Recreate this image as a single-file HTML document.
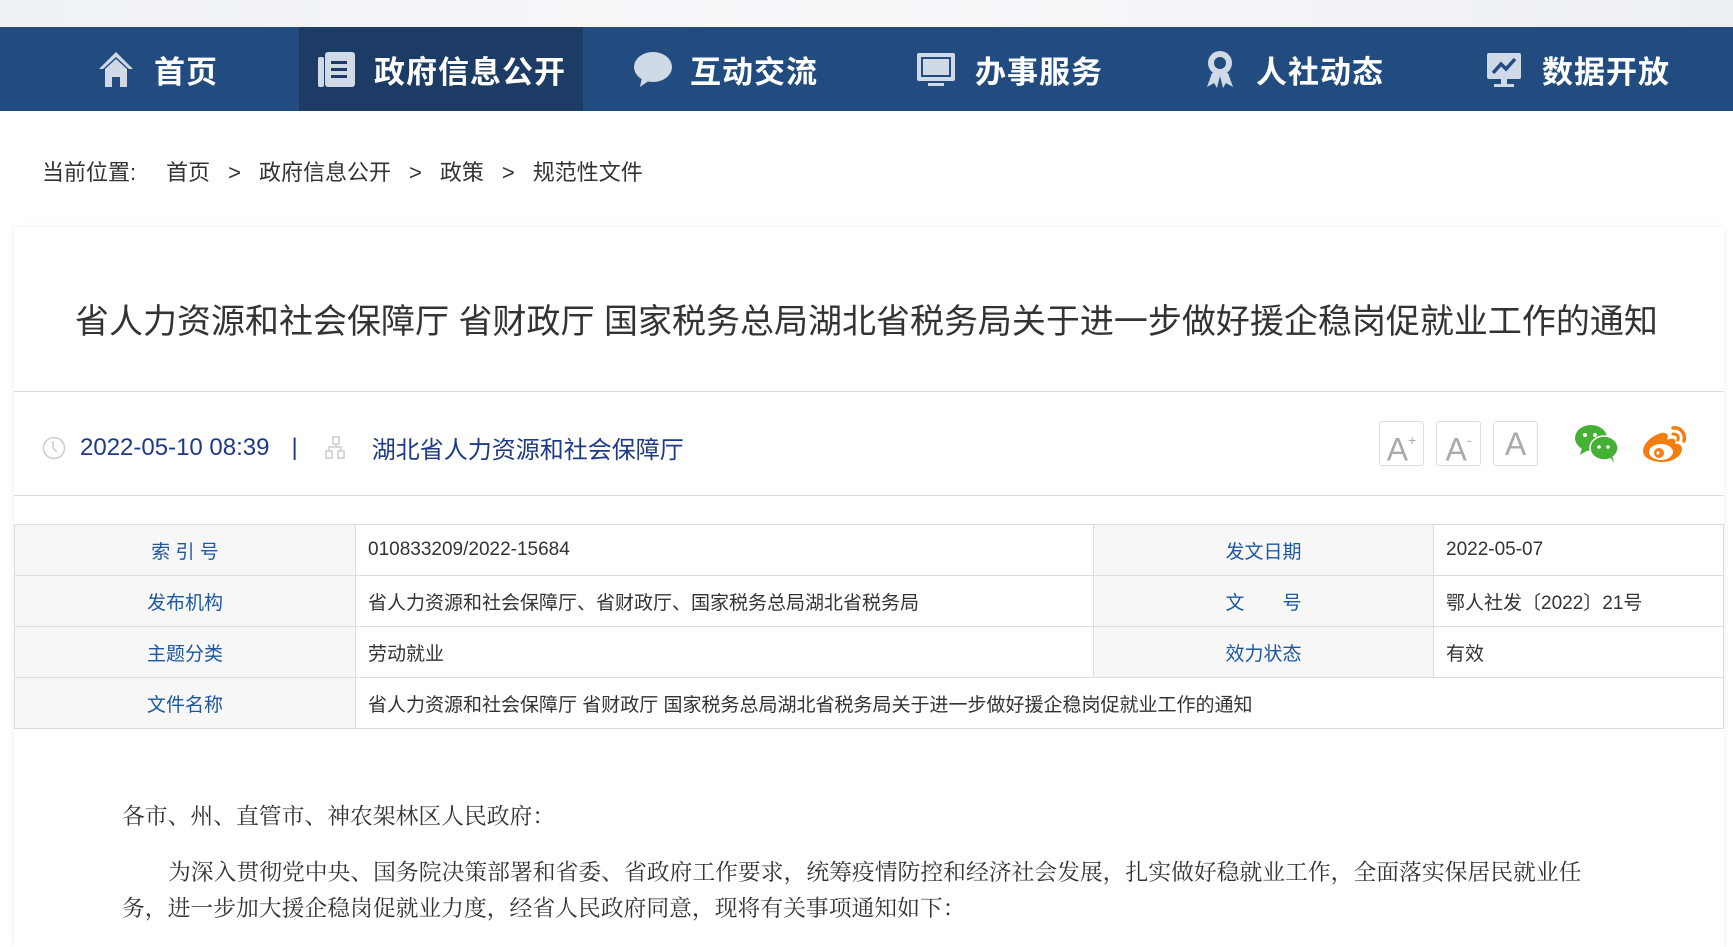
<!DOCTYPE html>
<html><head><meta charset="utf-8"><style>
*{margin:0;padding:0;box-sizing:border-box}
body{width:1733px;height:935px;overflow:hidden;background:#fff;font-family:"Liberation Sans","Noto Sans CJK SC",sans-serif;position:relative}
.top{position:absolute;left:0;top:0;width:1733px;height:27px;background:linear-gradient(90deg,#eef1f5,#f7f8fa,#eceff3)}
.nav{position:absolute;left:0;top:27px;width:1733px;height:84px;background:#224b80}
.tab{position:absolute;top:0;height:84px;width:284px;display:flex;align-items:center;justify-content:center;color:#fff;font-weight:bold;font-size:31px;letter-spacing:1px}
.tab svg{margin-right:18px}
.tab.act{background:#1c3c66}
.crumb{position:absolute;left:42px;top:155px;font-size:22px;color:#333}
.crumb span{margin:0 18px}
.card{position:absolute;left:14px;top:227px;width:1710px;height:720px;background:#fff;box-shadow:0 0 6px rgba(0,0,0,.08)}
.title{position:absolute;left:0;top:294px;width:1733px;text-align:center;font-size:34px;color:#333}
.hl{position:absolute;left:14px;width:1710px;height:1px;background:#ddd}
.meta{position:absolute;left:42px;top:430px;font-size:24px;color:#1e3a86;display:flex;align-items:center}
.fb{position:absolute;top:421px;width:45px;height:45px;border:1px solid #ddd;border-radius:3px;color:#aaa;font-size:32px;text-align:center;line-height:44px}
table{position:absolute;left:14px;top:524px;width:1710px;border-collapse:collapse;font-size:19px}
td{border:1px solid #ddd;height:51px;padding:0 12px;color:#333;vertical-align:middle}
td.k{background:#f7f7f7;color:#1e58a0;text-align:center}
.p{position:absolute;font-size:22.8px;color:#333;font-family:"Liberation Serif","Noto Serif CJK SC",serif}
</style></head><body>
<div class="top"></div>
<div class="nav">
 <div class="tab" style="left:15px"><svg width="40" height="40" viewBox="0 0 40 40"><path d="M20 3 L3 20 L7 20 L20 8 L33 20 L37 20Z" fill="#d0d9e6"/><path d="M9 20 L20 10 L31 20 L31 38 L24 38 L24 28 L16 28 L16 38 L9 38Z" fill="#d0d9e6"/></svg>首页</div>
 <div class="tab act" style="left:299px"><svg width="40" height="40" viewBox="0 0 40 40"><rect x="2" y="8" width="6" height="30" rx="2" fill="#d0d9e6"/><rect x="9" y="3" width="30" height="35" rx="3" fill="#d0d9e6"/><rect x="15" y="12" width="16" height="3" fill="#1c3c66"/><rect x="15" y="19" width="16" height="3" fill="#1c3c66"/><rect x="15" y="26" width="16" height="3" fill="#1c3c66"/></svg>政府信息公开</div>
 <div class="tab" style="left:583px"><svg width="40" height="40" viewBox="0 0 40 40"><ellipse cx="21" cy="18" rx="19" ry="15" fill="#d0d9e6"/><path d="M10 28 L8 38 L18 31Z" fill="#d0d9e6"/></svg>互动交流</div>
 <div class="tab" style="left:867px"><svg width="42" height="38" viewBox="0 0 42 38"><rect x="2" y="3" width="38" height="28" rx="2" fill="#d0d9e6"/><rect x="6" y="7" width="30" height="20" fill="#224b80"/><rect x="8" y="9" width="26" height="16" fill="#d0d9e6"/><rect x="13" y="33" width="16" height="3" fill="#d0d9e6"/></svg>办事服务</div>
 <div class="tab" style="left:1151px"><svg width="36" height="40" viewBox="0 0 36 40"><circle cx="18" cy="14" r="12" fill="#d0d9e6"/><circle cx="18" cy="14" r="6" fill="#224b80"/><path d="M10 24 L5 38 L12 34 L15 39 L18 27 L21 39 L24 34 L31 38 L26 24Z" fill="#d0d9e6"/></svg>人社动态</div>
 <div class="tab" style="left:1435px"><svg width="40" height="40" viewBox="0 0 40 40"><rect x="3" y="4" width="34" height="26" rx="2" fill="#d0d9e6"/><path d="M9 24 L17 15 L22 20 L31 10" stroke="#224b80" stroke-width="3.5" fill="none"/><rect x="17" y="30" width="6" height="5" fill="#d0d9e6"/><rect x="10" y="35" width="20" height="3" fill="#d0d9e6"/></svg>数据开放</div>
</div>
<div class="crumb">当前位置:<span style="margin-left:30px;margin-right:0"></span>首页<span>&gt;</span>政府信息公开<span>&gt;</span>政策<span>&gt;</span>规范性文件</div>
<div class="card"></div>
<div class="title">省人力资源和社会保障厅 省财政厅 国家税务总局湖北省税务局关于进一步做好援企稳岗促就业工作的通知</div>
<div class="hl" style="top:391px"></div>
<div class="meta"><svg width="24" height="24" viewBox="0 0 24 24" style="margin-right:14px"><circle cx="12" cy="12" r="10.5" stroke="#ccc" stroke-width="1.5" fill="none"/><path d="M11 5 V12 L15 16" stroke="#ccc" stroke-width="1.5" fill="none"/></svg>2022-05-10 08:39<span style="margin:0 26px 0 22px">|</span><svg width="24" height="24" viewBox="0 0 24 24" style="margin-right:24px"><rect x="9" y="1" width="6" height="7" stroke="#ccc" fill="none" stroke-width="1.5"/><rect x="2" y="15" width="6" height="7" stroke="#ccc" fill="none" stroke-width="1.5"/><rect x="14" y="15" width="6" height="7" stroke="#ccc" fill="none" stroke-width="1.5"/><path d="M12 8 V11 M5 15 V11 H17 V15" stroke="#ccc" fill="none" stroke-width="1.5"/></svg>湖北省人力资源和社会保障厅</div>
<div class="fb" style="left:1379px">A<sup style="font-size:14px;position:relative;top:-4px">+</sup></div>
<div class="fb" style="left:1436px">A<sup style="font-size:14px;position:relative;top:-4px">-</sup></div>
<div class="fb" style="left:1493px">A</div>
<svg style="position:absolute;left:1574px;top:423px" width="46" height="40" viewBox="0 0 46 40"><ellipse cx="17" cy="15" rx="16" ry="13" fill="#45b035"/><path d="M8 25 L6 32 L14 27Z" fill="#45b035"/><ellipse cx="30" cy="25" rx="14" ry="12" fill="#45b035" stroke="#fff" stroke-width="1.5"/><path d="M36 34 L40 40 L38 32Z" fill="#45b035"/><circle cx="11" cy="12" r="2" fill="#fff"/><circle cx="21" cy="12" r="2" fill="#fff"/><circle cx="25" cy="24" r="1.8" fill="#fff"/><circle cx="34" cy="24" r="1.8" fill="#fff"/></svg>
<svg style="position:absolute;left:1641px;top:423px" width="48" height="40" viewBox="0 0 48 40"><path d="M20 10 C10 13 2 21 2 28 C2 35 11 39 21 39 C33 39 41 32 41 26 C41 22 37 20 34 21 C36 16 32 14 26 17 C28 12 26 9 20 10Z" fill="#f47d10"/><ellipse cx="20" cy="29" rx="12" ry="8" fill="#fff"/><circle cx="18" cy="30" r="5" fill="#f47d10"/><circle cx="17" cy="30" r="1.6" fill="#fff"/><path d="M32 5 C39 4 45 10 43 18" stroke="#f47d10" stroke-width="3.5" fill="none" stroke-linecap="round"/><path d="M32 11 C36 11 38 13 37 17" stroke="#f47d10" stroke-width="3" fill="none" stroke-linecap="round"/></svg>
<div class="hl" style="top:495px"></div>
<table>
<tr><td class="k" style="width:341px">索 引 号</td><td style="width:738px">010833209/2022-15684</td><td class="k" style="width:340px">发文日期</td><td>2022-05-07</td></tr>
<tr><td class="k">发布机构</td><td>省人力资源和社会保障厅、省财政厅、国家税务总局湖北省税务局</td><td class="k">文　　号</td><td>鄂人社发〔2022〕21号</td></tr>
<tr><td class="k">主题分类</td><td>劳动就业</td><td class="k">效力状态</td><td>有效</td></tr>
<tr><td class="k">文件名称</td><td colspan="3">省人力资源和社会保障厅 省财政厅 国家税务总局湖北省税务局关于进一步做好援企稳岗促就业工作的通知</td></tr>
</table>
<div class="p" style="left:122px;top:798px">各市、州、直管市、神农架林区人民政府：</div>
<div class="p" style="left:122px;top:855px;width:1500px;line-height:36px;text-indent:46px">为深入贯彻党中央、国务院决策部署和省委、省政府工作要求，统筹疫情防控和经济社会发展，扎实做好稳就业工作，全面落实保居民就业任务，进一步加大援企稳岗促就业力度，经省人民政府同意，现将有关事项通知如下：</div>
</body></html>
